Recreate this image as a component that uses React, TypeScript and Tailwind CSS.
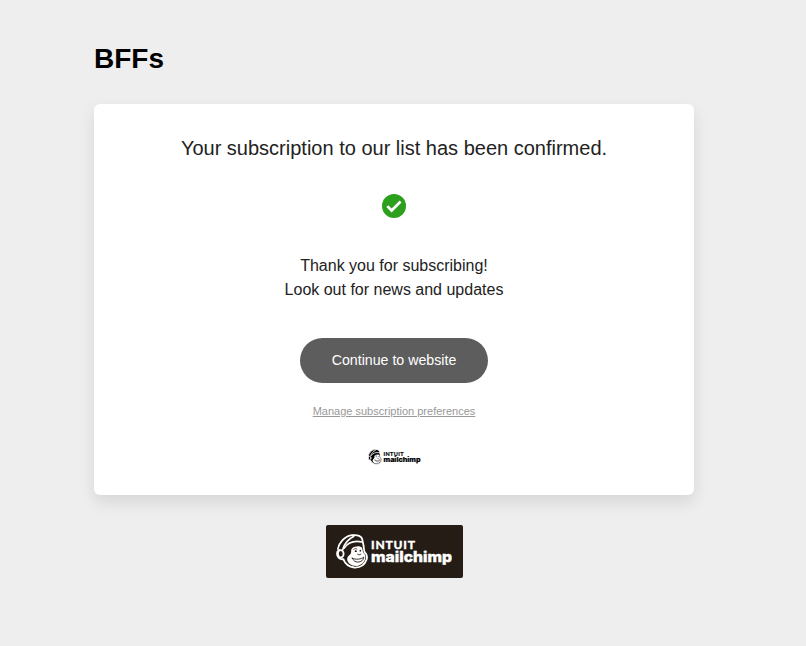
function Freddie({ ink, paper }: { ink: string; paper: string }) {
  return (
    <g strokeLinecap="round" strokeLinejoin="round">
      <path
        d="M3 16C4 9 10 2.2 17 1.2C21.5.5 25.8 2.4 26.3 5.5C26.6 8 27.3 9.4 27.6 12C28 14.5 27.6 16.5 28.9 18.5C31 20.5 31.6 22.5 30.6 25.5C28.8 30.7 24 33.8 18.2 33.5C12.8 33 9 29.5 7.3 25.2C3.5 25.6 1 23 1 19.4C1 17.8 1.8 16.6 3 16Z"
        fill={ink}
        stroke={paper}
        strokeWidth="1.8"
      />
      <path d="M1.8 15C2.6 9.4 8.6 2.2 15 1.3C17 1 18.2 1.8 17.6 2.6C13 4.8 8.6 9.4 6.8 15.4" fill={ink} stroke={paper} strokeWidth="1.7" />
      <path d="M8 14.2C11.8 9 18.4 6.4 25.8 8" fill="none" stroke={paper} strokeWidth="1.7" />
      <ellipse cx="4.8" cy="19.8" rx="2.8" ry="3.7" fill={ink} stroke={paper} strokeWidth="1.8" />
      <path
        d="M16.2 14.2C18.8 12 24.8 11.4 26.1 14C26.8 15.6 26.2 17.4 27.9 19.2C30 21.4 30 24.6 28.1 27.4C25.7 30.8 22 32.5 18 31.8C13.8 31 10.8 27.7 11.2 24.4C11.6 21.8 14.2 21.2 15 19C15.5 17.4 14.6 15.6 16.2 14.2Z"
        fill={paper}
      />
      <path d="M17.7 15.4C18.8 14.4 20 14.4 20.8 15" fill="none" stroke={ink} strokeWidth=".8" />
      <ellipse cx="19.8" cy="17.2" rx="1.1" ry=".9" fill={ink} />
      <ellipse cx="24.3" cy="16.7" rx=".8" ry="1" fill={ink} />
      <path d="M21.6 20.3C22.8 21.1 24.1 20.9 25 20.1" fill="none" stroke={ink} strokeWidth=".9" />
      <path d="M16.2 24.2C20 26 25.2 25.3 27.8 23.1C27.4 26.2 25 28.2 21.8 28.1C19.3 28 17.4 26.6 16.2 24.2Z" fill={paper} stroke={ink} strokeWidth=".9" />
    </g>
  );
}

function MailchimpLogo({ ink, paper, text, className }: { ink: string; paper: string; text: string; className: string }) {
  return (
    <svg viewBox="0 0 116 35" className={className} role="img" aria-label="Intuit Mailchimp">
      <Freddie ink={ink} paper={paper} />
      <text x="35" y="14.5" fill={text} stroke={text} strokeWidth=".3" textLength="44" lengthAdjust="spacing" className="font-['Lato',sans-serif] text-[12px] font-black">INTUIT</text>
      <text x="35" y="28" fill={text} stroke={text} strokeWidth=".4" textLength="81" lengthAdjust="spacingAndGlyphs" className="font-['Inter',sans-serif] text-[14.5px] font-extrabold">mailchimp</text>
    </svg>
  );
}

export default function App() {
  return (
    <main className="flex min-h-screen flex-col bg-[#eee] pl-[94px] font-['Liberation_Sans',Arial,sans-serif] text-black">
      <h1 className="mt-[41px] text-[28px] leading-[36px] font-bold">BFFs</h1>
      <section className="mt-[27px] flex h-[391px] w-[600px] flex-col items-center rounded-md bg-white shadow-[0_7px_16px_rgba(0,0,0,0.1)]">
        <h2 className="mt-[29px] text-[20px] leading-[30px] text-[#222]">Your subscription to our list has been confirmed.</h2>
        <svg viewBox="0 0 24 24" className="mt-[31px] size-6 shrink-0">
          <circle cx="12" cy="12" r="12" fill="#2c9f1c" />
          <path d="m5.3 12.1 4.3 4.4 9-9" fill="none" stroke="white" strokeWidth="2.7" />
        </svg>
        <p className="mt-9 text-center text-base leading-6 text-[#222]">
          Thank you for subscribing!
          <br />
          Look out for news and updates
        </p>
        <button className="mt-9 h-[45px] w-[188px] shrink-0 rounded-full bg-[#5d5d5d] text-[14.2px] text-white">Continue to website</button>
        <a href="#" className="mt-5 text-[11px] leading-4 text-[#999] underline">Manage subscription preferences</a>
        <MailchimpLogo ink="#000" paper="#fff" text="#000" className="mt-[30px] mr-px h-4 w-[54px] shrink-0" />
      </section>
      <footer className="mt-[30px] flex w-[600px] justify-center">
        <div className="flex h-[53px] w-[137px] items-center justify-center rounded-[2px] bg-[#241c15]">
          <MailchimpLogo ink="#241c15" paper="#fff" text="#fff" className="h-[35px] w-[116px]" />
        </div>
      </footer>
    </main>
  );
}
